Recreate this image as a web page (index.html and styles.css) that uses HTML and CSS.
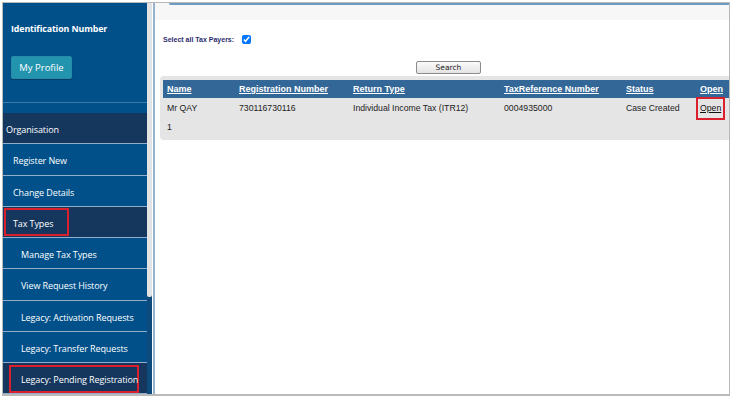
FILE: index.html
```html
<!DOCTYPE html>
<html lang="en">
<head>
  <meta charset="UTF-8">
  <meta name="viewport" content="width=device-width, initial-scale=1.0">
  <title>Tax Types - Pending Registration</title>
  <link rel="stylesheet" href="styles.css">
</head>
<body>

  <div class="frame">
    <aside class="sidebar">
      <div class="side-body">
        <div class="profile">
          <div class="id-title">Identification Number</div>
          <button class="btn-profile">My Profile</button>
        </div>
        <div class="profile-gap"></div>
        <nav class="menu">
          <a class="item group">Organisation</a>
          <a class="item">Register New</a>
          <a class="item">Change Details</a>
          <a class="item active"><span class="mark mark-tax">Tax Types</span></a>
          <a class="item sub">Manage Tax Types</a>
          <a class="item sub">View Request History</a>
          <a class="item sub">Legacy: Activation Requests</a>
          <a class="item sub">Legacy: Transfer Requests</a>
          <a class="item sub active"><span class="mark mark-pending">Legacy: Pending Registration</span></a>
        </nav>
      </div>
      <div class="scrollbar"><div class="thumb"></div></div>
    </aside>

    <main class="content">
      <div class="topbar"><div class="topbar-edge"></div></div>

      <div class="select-row">
        <label for="selectAll">Select all Tax Payers:</label>
        <input type="checkbox" id="selectAll" checked>
      </div>

      <div class="search-row">
        <button class="btn-search">Search</button>
      </div>

      <div class="grid-panel">
        <table class="grid">
          <colgroup>
            <col style="width:72px">
            <col style="width:114px">
            <col style="width:151px">
            <col style="width:122px">
            <col style="width:74px">
            <col>
          </colgroup>
          <thead>
            <tr>
              <th><a>Name</a></th>
              <th><a>Registration Number</a></th>
              <th><a>Return Type</a></th>
              <th><a>TaxReference Number</a></th>
              <th><a>Status</a></th>
              <th><a>Open</a></th>
            </tr>
          </thead>
          <tbody>
            <tr>
              <td>Mr QAY</td>
              <td>730116730116</td>
              <td>Individual Income Tax (ITR12)</td>
              <td>0004935000</td>
              <td>Case Created</td>
              <td><a class="open-link">Open</a></td>
            </tr>
          </tbody>
        </table>
        <div class="pager">1</div>
      </div>
    </main>
  </div>

</body>
</html>
```

FILE: styles.css
```css
body {
  margin: 0;
  background-color: white;
  font-family: "Liberation Sans", Arial, sans-serif;
}

.frame {
  margin: 2px;
  width: 726px;
  height: 391px;
  border: 1px solid #b9b9b9;
  border-bottom-width: 2px;
  display: flex;
  overflow: hidden;
}

/* sidebar */

.sidebar {
  display: flex;
  flex-shrink: 0;
  background-color: #01508a;
}

.side-body {
  width: 144px;
  font-family: "Open Sans", sans-serif;
  color: white;
}

.profile {
  height: 100px;
  padding: 20px 0 0 8px;
  box-sizing: border-box;
  border-bottom: 1px solid #3b79aa;
}

.id-title {
  font-size: 8.8px;
  font-weight: bold;
  letter-spacing: -0.1px;
}

.btn-profile {
  margin-top: 21px;
  width: 61px;
  height: 23px;
  background-color: #2394ae;
  color: white;
  border: 1px solid #2a8aa6;
  border-radius: 2px;
  font-family: "Open Sans", sans-serif;
  font-size: 9.5px;
  font-weight: 500;
  padding: 0;
  box-shadow: 0 1px 1px rgba(0, 0, 0, 0.25);
}

.profile-gap {
  height: 10px;
}

.menu {
  display: flex;
  flex-direction: column;
}

.item {
  height: 31.25px;
  box-sizing: border-box;
  border-bottom: 1px solid #92aecb;
  display: flex;
  align-items: center;
  padding: 3px 0 0 10px;
  font-size: 9px;
  font-weight: 500;
  color: white;
  white-space: nowrap;
  letter-spacing: -0.1px;
}

.item.group {
  padding-left: 3px;
  background-color: #15365d;
}

.item.sub {
  padding-left: 18px;
}

.item.active {
  background-color: #15365d;
}

.mark {
  border: 2px solid #d9202c;
  height: 28px;
  box-sizing: border-box;
  display: flex;
  align-items: center;
  margin-top: -2px;
  padding-top: 2px;
}

.mark-tax {
  width: 65px;
  margin-left: -9px;
  padding-left: 7px;
}

.mark-pending {
  width: 130px;
  margin-left: -12px;
  padding-left: 10px;
}

.scrollbar {
  width: 5px;
  background-color: #0d4b7d;
}

.thumb {
  height: 294px;
  background-color: #e3e3e3;
  border-radius: 0 0 2px 2px;
}

/* main area */

.content {
  flex: 1;
  margin-left: 1px;
  border-left: 2px solid #93b3cf;
  min-width: 0;
}

.topbar {
  height: 17px;
  background-color: #f7f7f7;
}

.topbar-edge {
  margin-left: 14px;
  height: 2px;
  border-top: 2px solid #6e9bc6;
  border-left: 1px solid #6e9bc6;
  border-bottom-left-radius: 2px;
  box-sizing: border-box;
}

.select-row {
  display: flex;
  align-items: center;
  padding-left: 8px;
  margin-top: 13px;
  height: 12px;
}

.select-row label {
  font-size: 7px;
  font-weight: bold;
  color: #2d2d6e;
}

.select-row input {
  margin: 0 0 0 8px;
  width: 9px;
  height: 9px;
}

.search-row {
  padding-left: 261px;
  margin-top: 16px;
}

.btn-search {
  width: 65px;
  height: 13px;
  padding: 0;
  border: 1px solid #8c8c8c;
  border-radius: 2px;
  background: linear-gradient(#fbfbfb, #e4e4e4);
  font-family: "DejaVu Sans", Tahoma, sans-serif;
  font-size: 7.5px;
  color: #222;
  display: block;
}

.grid-panel {
  margin: 2px 0 0 5px;
  padding: 4px 0 0 3px;
  height: 64px;
  box-sizing: border-box;
  background-color: #e5e5e5;
  border-radius: 4px 0 0 4px;
}

.grid {
  width: 100%;
  border-collapse: collapse;
  table-layout: fixed;
  font-size: 8.7px;
  color: #222;
}

.grid th {
  background-color: #336798;
  height: 18px;
  padding: 0 0 0 4px;
  text-align: left;
  font-size: 9px;
}

.grid th a {
  color: white;
  text-decoration: underline;
}

.grid td {
  height: 19px;
  padding: 0 0 0 4px;
}

.open-link {
  color: #111;
  text-decoration: underline;
  border: 2px solid #d9202c;
  padding: 4px 2px 5px 2px;
  margin-left: -4px;
}

.pager {
  font-size: 8.7px;
  color: #222;
  padding: 5px 0 0 4px;
}
```
